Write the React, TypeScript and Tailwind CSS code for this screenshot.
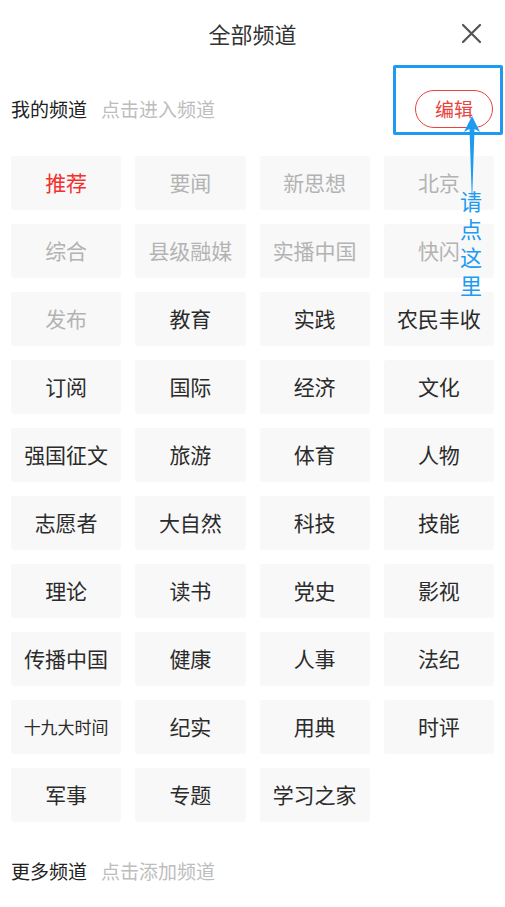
import React from "react";

const font = { fontFamily: '"Noto Sans CJK SC", "Noto Sans", sans-serif' };

type Item = { t: string; c: "red" | "gray" | "dark"; small?: boolean };

const items: Item[] = [
  { t: "推荐", c: "red" },
  { t: "要闻", c: "gray" },
  { t: "新思想", c: "gray" },
  { t: "北京", c: "gray" },
  { t: "综合", c: "gray" },
  { t: "县级融媒", c: "gray" },
  { t: "实播中国", c: "gray" },
  { t: "快闪", c: "gray" },
  { t: "发布", c: "gray" },
  { t: "教育", c: "dark" },
  { t: "实践", c: "dark" },
  { t: "农民丰收", c: "dark" },
  { t: "订阅", c: "dark" },
  { t: "国际", c: "dark" },
  { t: "经济", c: "dark" },
  { t: "文化", c: "dark" },
  { t: "强国征文", c: "dark" },
  { t: "旅游", c: "dark" },
  { t: "体育", c: "dark" },
  { t: "人物", c: "dark" },
  { t: "志愿者", c: "dark" },
  { t: "大自然", c: "dark" },
  { t: "科技", c: "dark" },
  { t: "技能", c: "dark" },
  { t: "理论", c: "dark" },
  { t: "读书", c: "dark" },
  { t: "党史", c: "dark" },
  { t: "影视", c: "dark" },
  { t: "传播中国", c: "dark" },
  { t: "健康", c: "dark" },
  { t: "人事", c: "dark" },
  { t: "法纪", c: "dark" },
  { t: "十九大时间", c: "dark", small: true },
  { t: "纪实", c: "dark" },
  { t: "用典", c: "dark" },
  { t: "时评", c: "dark" },
  { t: "军事", c: "dark" },
  { t: "专题", c: "dark" },
  { t: "学习之家", c: "dark" },
];

export default function App() {
  return (
    <div className="relative w-[505px] h-[907px] bg-white overflow-hidden" style={font}>
      {/* header */}
      <div className="relative h-[66px] flex items-center justify-center">
        <span className="text-[22px] leading-[30px] text-[#333]">全部频道</span>
        <svg className="absolute left-[461px] top-[23px]" width="21" height="21" viewBox="0 0 21 21">
          <path d="M2 2 L19 19 M19 2 L2 19" stroke="#555" strokeWidth="2.2" strokeLinecap="round" />
        </svg>
      </div>

      {/* my channels row */}
      <div className="h-[90px] flex items-start pl-[11px] pr-[12px] pt-[28px]">
        <div className="flex items-center h-[30px]">
          <span className="text-[19px] text-[#222]">我的频道</span>
          <span className="text-[19px] text-[#bdbdbd] ml-[14px]">点击进入频道</span>
        </div>
        <div className="ml-auto mt-[-4px] w-[78px] h-[38px] rounded-full border border-[#e8433e] flex items-center justify-center text-[19px] text-[#e8433e]">
          编辑
        </div>
      </div>

      {/* grid */}
      <div className="px-[11px] grid grid-cols-4 gap-x-[14px] gap-y-[14px] w-[505px]">
        {items.map((it) => (
          <div
            key={it.t}
            className="h-[54px] bg-[#f8f8f8] rounded-[3px] flex items-center justify-center"
          >
            <span
              className={
                (it.small ? "text-[17px] " : "text-[21px] ") +
                (it.c === "red" ? "text-[#f2302c]" : it.c === "gray" ? "text-[#b3b3b3]" : "text-[#2b2b2b]")
              }
            >
              {it.t}
            </span>
          </div>
        ))}
      </div>

      {/* more channels */}
      <div className="flex items-center pl-[11px] mt-[35px]">
        <span className="text-[19px] text-[#222]">更多频道</span>
        <span className="text-[19px] text-[#bdbdbd] ml-[14px]">点击添加频道</span>
      </div>

      {/* annotation overlay */}
      <div className="absolute left-[393px] top-[65px] w-[110px] h-[70px] border-[3px] border-[#1e9bf0] rounded-[2px]" />
      <svg className="absolute left-[460px] top-[112px]" width="24" height="100" viewBox="0 0 24 100">
        <path d="M12 4 L4 20 L9.5 17 L12 92 L14.5 17 L20 20 Z" fill="#1e9bf0" />
      </svg>
      <div className="absolute left-[460px] top-[191px] text-[22px] leading-[22px] tracking-[6px] text-[#1e9bf0] [writing-mode:vertical-rl]">
        请点这里
      </div>
    </div>
  );
}
